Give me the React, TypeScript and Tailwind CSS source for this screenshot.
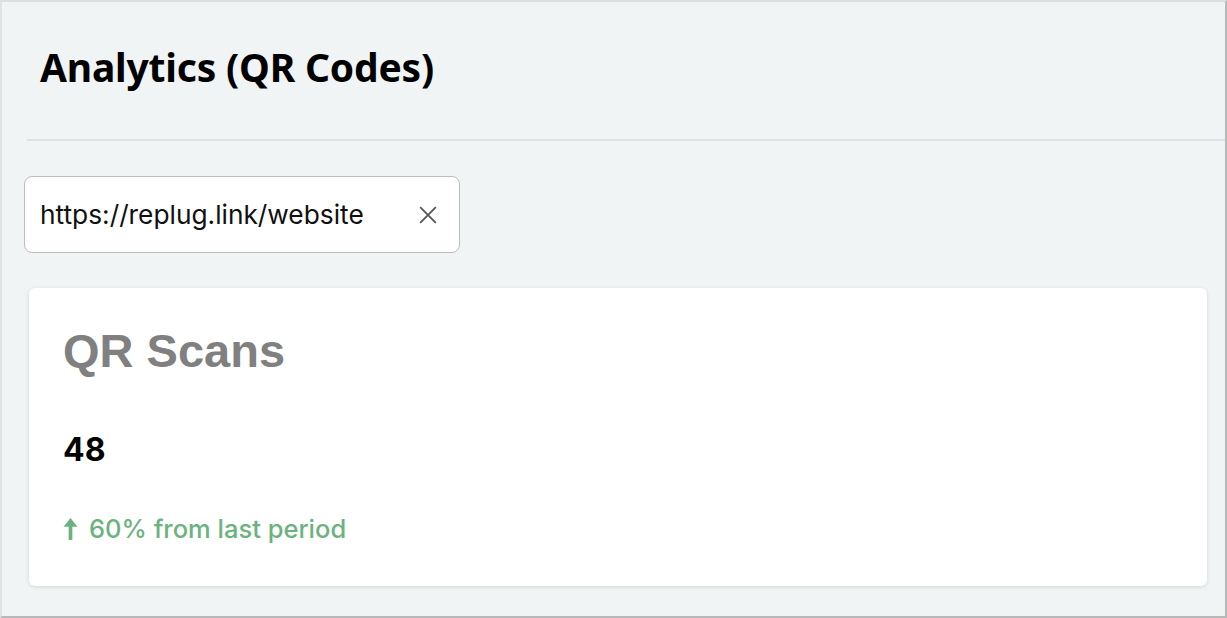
import React from 'react';

const CloseIcon: React.FC<{ className?: string }> = ({ className }) => (
  <svg viewBox="0 0 24 24" fill="none" stroke="currentColor" strokeWidth={2} strokeLinecap="round" className={className}>
    <path d="M4 4l16 16M20 4L4 20" />
  </svg>
);

const ArrowUp: React.FC<{ className?: string }> = ({ className }) => (
  <svg viewBox="0 0 16 26" fill="currentColor" className={className}>
    <path d="M8 1L15.5 10.5H10V25H6V10.5H0.5Z" />
  </svg>
);

export default function App() {
  return (
    <div className="w-[1227px] h-[618px] bg-[#f1f4f5] border-t-2 border-l-2 border-r-2 border-b-2 border-t-[#dcdfe0] border-l-[#e0e2e3] border-r-[#b8b8b8] border-b-[#b8b8b8] overflow-hidden" style={{ fontFamily: 'Inter, "Liberation Sans", sans-serif' }}>
      <div className="pl-[22px]">
        <div className="h-[139px] flex items-center pl-[13px] pb-[6px] border-b-2 border-[#dde1e3] ml-[3px]">
          <h1 className="text-[39px] font-bold text-black tracking-[-0.2px]" style={{ fontFamily: '"Noto Sans", sans-serif' }}>Analytics (QR Codes)</h1>
        </div>

        <div className="mt-[35px] w-[436px] h-[77px] bg-white border border-[#bdbdbd] rounded-[8px] flex items-center justify-between pl-[15px] pr-[20px]">
          <span className="text-[26.3px] text-[#111]">https://replug.link/website</span>
          <CloseIcon className="w-[22px] h-[22px] text-[#555]" />
        </div>

        <div className="mt-[35px] ml-[5px] w-[1178px] h-[298px] bg-white rounded-[6px] shadow-[0_1px_4px_rgba(0,0,0,0.12)] pl-[34px] pt-[39px]">
          <h2 className="text-[47px] font-bold text-[#808080] leading-none" style={{ fontFamily: '"Liberation Sans", Arial, sans-serif' }}>QR Scans</h2>
          <div className="mt-[60px] text-[32px] font-bold text-black leading-none">48</div>
          <div className="mt-[50px] flex items-center gap-[11px] text-[#6cb27e] text-[25.5px] font-medium leading-none">
            <ArrowUp className="w-[15px] h-[24px]" />
            <span>60% from last period</span>
          </div>
        </div>
      </div>
    </div>
  );
}
